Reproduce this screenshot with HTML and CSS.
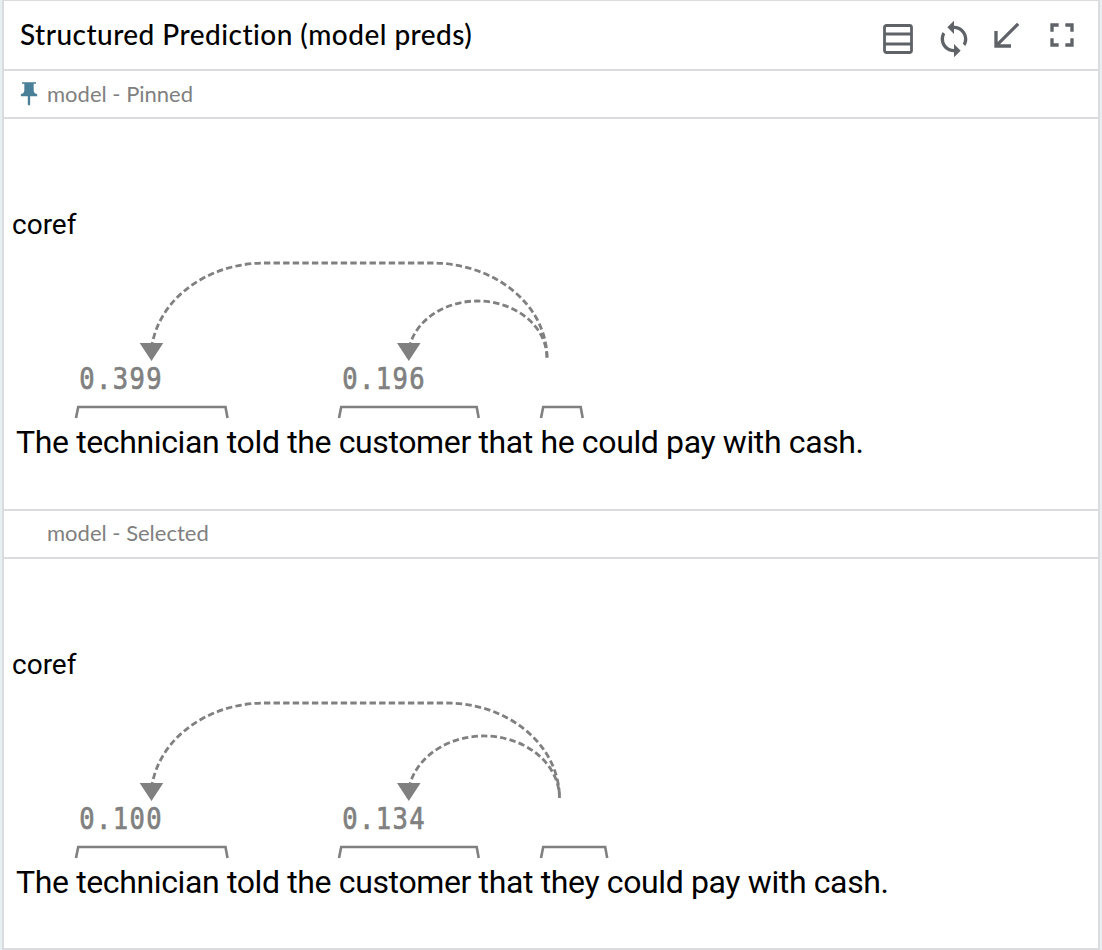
FILE: index.html
```html
<!DOCTYPE html>
<html lang="en">
<head>
<meta charset="utf-8">
<title>Structured Prediction</title>
<link rel="stylesheet" href="styles.css">
</head>
<body>
<main class="module">
  <header class="module-header">
    <h1 class="title">Structured Prediction (model preds)</h1>
    <div class="actions">
      <svg class="icon rows" viewBox="0 0 30 30"><rect x="1.5" y="1.5" width="27" height="27" rx="2"/><path d="M1.5 10h27M1.5 20h27"/></svg>
      <svg class="icon sync" viewBox="0 0 24 24"><path d="M12 4V1L8 5l4 4V6c3.31 0 6 2.69 6 6 0 1.01-.25 1.97-.7 2.8l1.46 1.46C19.54 15.03 20 13.57 20 12c0-4.42-3.58-8-8-8zm0 14c-3.31 0-6-2.69-6-6 0-1.01.25-1.97.7-2.8L5.24 7.74C4.46 8.97 4 10.43 4 12c0 4.42 3.58 8 8 8v3l4-4-4-4v3z"/></svg>
      <svg class="icon minimize" viewBox="0 0 24 24"><path d="M20 5.41L18.59 4 7 15.59V9H5v10h10v-2H8.41z"/></svg>
      <svg class="icon fullscreen" viewBox="0 0 24 24"><path d="M7 14H5v5h5v-2H7v-3zm-2-4h2V7h3V5H5v5zm12 7h-3v2h5v-5h-2v3zM14 5v2h3v3h2V5h-5z"/></svg>
    </div>
  </header>

  <section class="group">
    <div class="group-header">
      <svg class="pin" viewBox="0 0 24 24"><path d="M16 9V3.200h2V2H6v1.200h2v5.800c0 1.660-1.340 3-3 3v2h5.970v7l1 1 1-1v-7H19v-2c-1.660 0-3-1.340-3-3z"/></svg>
      <span class="label pinned-label">model - Pinned</span>
    </div>
    <div class="group-body">
      <h2 class="field">coref</h2>
      <svg class="graph" viewBox="4 240 1094 230">
        <path class="edge" d="M151 358A114 95 0 0 1 265 263H432A115 95 0 0 1 547 358"/>
        <path class="edge" d="M408 358A69.5 57 0 0 1 547 358"/>
        <path class="head" d="M139.7 343h23.6l-11.8 18zM397 343h23.6l-11.8 18z"/>
        <text class="score" transform="translate(79.2 389) scale(.85 1)">0.399</text>
        <text class="score" transform="translate(342.2 389) scale(.85 1)">0.196</text>
        <path class="span" d="M76 418l2.2-11h147.3l2 11M339 418l2.2-11h135.5l2 11M541 418l2.2-11h37.5l2 11"/>
        <text class="sentence" x="16" y="453" textLength="848">The technician told the customer that he could pay with cash.</text>
      </svg>
    </div>
  </section>

  <section class="group">
    <div class="group-header">
      <span class="pin"></span>
      <span class="label">model - Selected</span>
    </div>
    <div class="group-body">
      <h2 class="field">coref</h2>
      <svg class="graph" viewBox="4 240 1094 230">
        <path class="edge" d="M151 358A114 95 0 0 1 265 263H446.5A113 95 0 0 1 559.5 358"/>
        <path class="edge" d="M408 358A75.7 62 0 0 1 559.5 358"/>
        <path class="head" d="M139.7 343h23.6l-11.8 18zM397 343h23.6l-11.8 18z"/>
        <text class="score" transform="translate(79.2 389) scale(.85 1)">0.100</text>
        <text class="score" transform="translate(342.2 389) scale(.85 1)">0.134</text>
        <path class="span" d="M76 418l2.2-11h147.3l2 11M339 418l2.2-11h135.5l2 11M541 418l2.2-11h62l2 11"/>
        <text class="sentence" x="16" y="453" textLength="873">The technician told the customer that they could pay with cash.</text>
      </svg>
    </div>
  </section>
</main>
</body>
</html>
```

FILE: styles.css
```css
* { box-sizing: border-box; }
body {
  margin: 0;
  height: 950px;
  padding: 0 2px;
  background: #e8eff3;
  font-family: Roboto, sans-serif;
  color: #000;
}
.module {
  height: 950px;
  border: 2px solid #dadce0;
  border-top-width: 1px;
  background: #fff;
  display: flex;
  flex-direction: column;
}
.module-header {
  flex: none;
  height: 70px;
  border-bottom: 2px solid #dadce0;
  display: flex;
  justify-content: space-between;
  padding: 0 16px;
}
.title {
  margin: 16px 0 0;
  font: 500 28px/34px Lato, sans-serif;
  letter-spacing: 0.47px;
  white-space: nowrap;
}
.actions { display: flex; align-items: flex-start; }
.icon { width: 40px; height: 40px; fill: #5f6368; flex: none; }
.rows { width: 30px; height: 30px; fill: none; stroke: #5f6368; stroke-width: 2.8; margin: 23px 21px 0 0; }
.sync { margin: 18px 12px 0 0; }
.minimize { margin: 14.5px 16px 0 0; }
.fullscreen { margin-top: 14px; }
.group { flex: none; }
.group-header {
  height: 48px;
  border-bottom: 2px solid #dadce0;
  display: flex;
  align-items: center;
  padding-left: 11px;
}
.pin { width: 28px; height: 28px; fill: #4a7f98; margin-right: 4px; }
.label {
  font: 400 22px/28px Lato, sans-serif;
  color: #808080;
  padding-bottom: 2px;
}
.pinned-label { padding-bottom: 0; }
.group-body { height: 390px; padding-top: 90px; }
.group + .group { border-top: 2px solid #dadce0; }
.group + .group .group-body { height: 389px; }
.field {
  margin: 0 0 0 8px;
  height: 31px;
  font: 400 28px/32px Roboto, sans-serif;
}
.graph { display: block; width: 1094px; height: 230px; }
.edge { fill: none; stroke: #808080; stroke-width: 2.8; stroke-dasharray: 6.4 3.2; }
.head { fill: #808080; }
.span { fill: none; stroke: #808080; stroke-width: 2.6; }
.score {
  font: 30px "DejaVu Sans Mono", monospace;
  letter-spacing: 1.7px;
  fill: #808080;
  stroke: #808080;
  stroke-width: 0.7;
}
.sentence { font: 32px Roboto, sans-serif; fill: #000; }
```
